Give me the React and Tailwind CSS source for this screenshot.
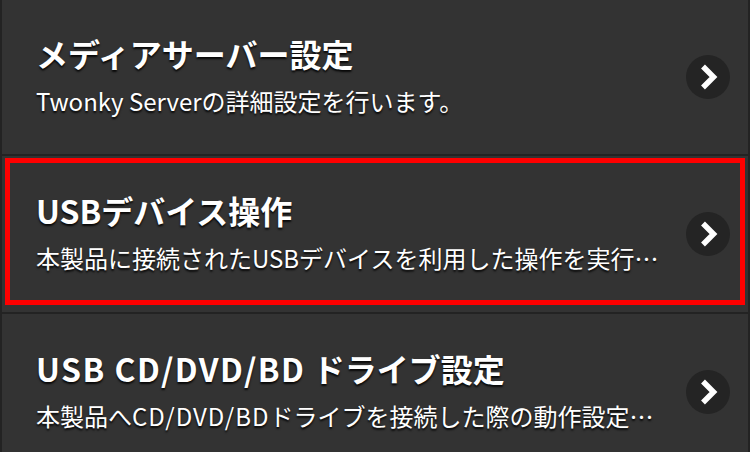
import React from "react";

const rows = [
  {
    title: "メディアサーバー設定",
    sub: "Twonky Serverの詳細設定を行います。",
    h: "h-[154px]",
  },
  {
    title: "USBデバイス操作",
    sub: "本製品に接続されたUSBデバイスを利用した操作を実行…",
    h: "h-[156px]",
    selected: true,
  },
  {
    title: (
      <>
        <span className="tracking-[1.5px]">USB CD/DVD/BD</span> ドライブ設定
      </>
    ),
    sub: (
      <>
        本製品へ<span className="tracking-[1px]">CD/DVD/BD</span>ドライブを接続した際の動作設定…
      </>
    ),
    h: "h-[156px]",
  },
];

function Chevron() {
  return (
    <div className="w-[44px] h-[44px] shrink-0 rounded-full bg-[#242424] flex items-center justify-center">
      <svg width="44" height="44" viewBox="0 0 44 44">
        <polyline points="17,11.5 27.5,22 17,32.5" fill="none" stroke="#ffffff" strokeWidth="5.5" strokeLinejoin="miter" strokeLinecap="butt" />
      </svg>
    </div>
  );
}

export default function App() {
  return (
    <div className="w-[750px] h-[452px] overflow-hidden bg-[#232323] flex flex-col gap-[2px] px-[2px] font-['Noto_Sans_CJK_JP',sans-serif] text-white">
      {rows.map((r, i) => (
        <div key={i} className={`relative ${r.h} shrink-0 bg-[#333333] flex items-center pl-[34px] pr-[18px] gap-[16px]`}>
          <div className="flex-1 min-w-0 flex flex-col gap-[12px] pb-[4px]">
            <div className="text-[32px] leading-[40px] font-bold whitespace-nowrap [text-shadow:0_2px_2px_rgba(0,0,0,0.85)]">
              {r.title}
            </div>
            <div className="text-[24px] leading-[32px] whitespace-nowrap [text-shadow:0_2px_2px_rgba(0,0,0,0.85)]">
              {r.sub}
            </div>
          </div>
          <Chevron />
          {r.selected && (
            <div className="absolute left-[3px] right-[3px] top-[2px] h-[147px] border-[5px] border-[#ff0000] pointer-events-none" />
          )}
        </div>
      ))}
    </div>
  );
}
